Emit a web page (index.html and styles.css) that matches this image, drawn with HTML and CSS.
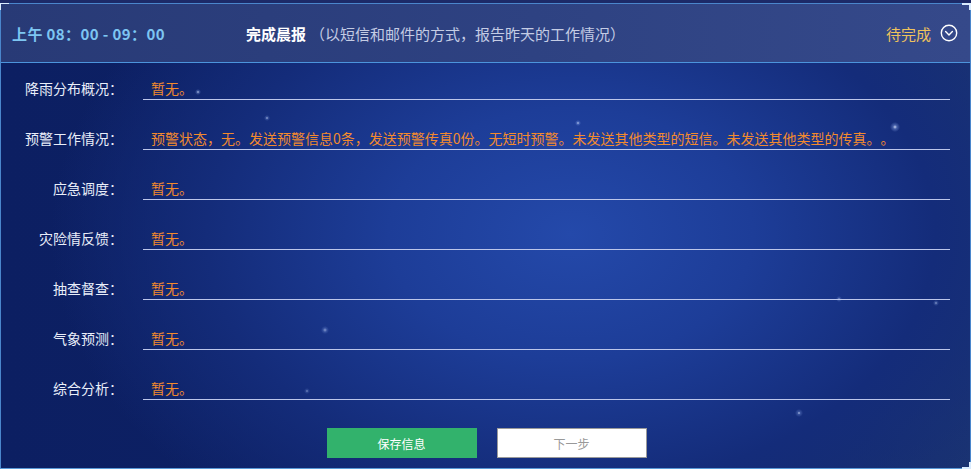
FILE: index.html
```html
<!DOCTYPE html>
<html lang="zh">
<head>
<meta charset="utf-8">
<title>完成晨报</title>
<link rel="stylesheet" href="styles.css">
</head>
<body>
<div class="panel">
  <div class="header">
    <div class="time">上午 08：00 - 09：00</div>
    <div class="title"><span class="title-main">完成晨报</span><span class="title-sub">（以短信和邮件的方式，报告昨天的工作情况）</span></div>
    <div class="status">
      <span class="status-text">待完成</span>
      <svg class="status-icon" width="18" height="18" viewBox="0 0 18 18"><circle cx="9" cy="9" r="7.7" fill="none" stroke="#ffffff" stroke-width="1.4"/><path d="M5.6 7.6 L9 11 L12.4 7.6" fill="none" stroke="#ffffff" stroke-width="1.4" stroke-linecap="round" stroke-linejoin="round"/></svg>
    </div>
  </div>
  <div class="form">
    <div class="row"><div class="label">降雨分布概况：</div><div class="value">暂无。</div></div>
    <div class="row"><div class="label">预警工作情况：</div><div class="value">预警状态，无。发送预警信息0条，发送预警传真0份。无短时预警。未发送其他类型的短信。未发送其他类型的传真。。</div></div>
    <div class="row"><div class="label">应急调度：</div><div class="value">暂无。</div></div>
    <div class="row"><div class="label">灾险情反馈：</div><div class="value">暂无。</div></div>
    <div class="row"><div class="label">抽查督查：</div><div class="value">暂无。</div></div>
    <div class="row"><div class="label">气象预测：</div><div class="value">暂无。</div></div>
    <div class="row"><div class="label">综合分析：</div><div class="value">暂无。</div></div>
    <div class="actions">
      <button class="btn btn-save">保存信息</button>
      <button class="btn btn-next">下一步</button>
    </div>
  </div>
</div>
</body>
</html>
```
FILE: styles.css
```css
html, body {
  margin: 0;
  padding: 0;
}
body {
  background: #1c2a68;
  font-family: "Noto Sans CJK SC", "Noto Sans", sans-serif;
  text-spacing-trim: space-all;
  width: 971px;
  height: 469px;
  overflow: hidden;
}
.panel {
  position: relative;
  margin-top: 3px;
  height: 466px;
  box-sizing: border-box;
  border: 1px solid #4a86cc;
  border-bottom-color: #5a9ad8;
  background:
    radial-gradient(circle at 197px 88px, rgba(210,225,255,0.8) 0, rgba(160,190,255,0.25) 1.5px, rgba(160,190,255,0) 3px),
    radial-gradient(circle at 266px 114px, rgba(210,225,255,0.7) 0, rgba(160,190,255,0.2) 1.5px, rgba(160,190,255,0) 3px),
    radial-gradient(circle at 577px 119px, rgba(210,225,255,0.8) 0, rgba(160,190,255,0.25) 1.5px, rgba(160,190,255,0) 3px),
    radial-gradient(circle at 894px 123px, rgba(220,230,255,0.9) 0, rgba(160,190,255,0.35) 2px, rgba(160,190,255,0) 5px),
    radial-gradient(circle at 324px 326px, rgba(210,225,255,0.6) 0, rgba(160,190,255,0.2) 2px, rgba(160,190,255,0) 4px),
    radial-gradient(circle at 306px 387px, rgba(210,225,255,0.5) 0, rgba(160,190,255,0.15) 1.5px, rgba(160,190,255,0) 3px),
    radial-gradient(circle at 838px 295px, rgba(210,225,255,0.6) 0, rgba(160,190,255,0.2) 1.5px, rgba(160,190,255,0) 3px),
    radial-gradient(circle at 935px 299px, rgba(210,225,255,0.6) 0, rgba(160,190,255,0.2) 1.5px, rgba(160,190,255,0) 3px),
    radial-gradient(circle at 798px 409px, rgba(210,225,255,0.8) 0, rgba(160,190,255,0.25) 1.5px, rgba(160,190,255,0) 4px),
    radial-gradient(ellipse 520px 360px at 570px 230px, #2449aa 0%, #1d3d98 35%, #142c7a 70%, rgba(14,34,100,0) 100%),
    linear-gradient(90deg, #0c1f62 0%, #0e2266 60%, #1a3372 100%);
}
.panel::before,
.panel::after {
  content: "";
  position: absolute;
  width: 7px;
  height: 5px;
  pointer-events: none;
}
.panel::before {
  top: -1px;
  left: -1px;
  border-top: 2px solid #d9ecff;
  border-left: 2px solid #d9ecff;
}
.panel::after {
  right: -1px;
  bottom: -1px;
  border-bottom: 2px solid #d9ecff;
  border-right: 2px solid #d9ecff;
}
.header {
  position: relative;
  height: 58px;
  border-bottom: 1px solid #4c94dc;
  background: linear-gradient(90deg, #283a76 0%, #2e4282 55%, #35498a 100%);
  display: flex;
  align-items: center;
  padding: 0 12px 0 11px;
}
.header::after {
  content: "";
  position: absolute;
  top: -1px;
  right: -1px;
  width: 7px;
  height: 5px;
  border-top: 2px solid #d9ecff;
  border-right: 2px solid #d9ecff;
}
.time {
  width: 234px;
  flex: none;
  color: #7dc6f2;
  font-size: 15px;
  font-weight: bold;
  letter-spacing: 0.4px;
  white-space: nowrap;
}
.title {
  flex: 1;
  white-space: nowrap;
  font-size: 15px;
}
.title-main {
  color: #ffffff;
  font-weight: bold;
  margin-right: 4px;
}
.title-sub {
  color: #c4cce4;
}
.status {
  display: flex;
  align-items: center;
  gap: 9px;
}
.status-text {
  color: #eec35c;
  font-size: 15px;
}
.status-icon {
  display: block;
}
.form {
  padding: 14px 20px 0 0;
  display: flex;
  flex-direction: column;
  gap: 27px;
}
.row {
  display: flex;
  align-items: flex-end;
}
.label {
  width: 122px;
  flex: none;
  text-align: right;
  color: #e9eef9;
  font-size: 14px;
  line-height: 22px;
  padding-bottom: 1px;
  white-space: nowrap;
}
.value {
  flex: 1;
  margin-left: 20px;
  padding-left: 8px;
  color: #f28a2e;
  font-size: 14px;
  line-height: 22px;
  border-bottom: 1px solid #bcc6ea;
  white-space: nowrap;
  overflow: hidden;
}
.actions {
  display: flex;
  justify-content: center;
  gap: 20px;
  margin-top: 1px;
  padding-left: 22px;
}
.btn {
  width: 150px;
  height: 30px;
  font-family: "Noto Sans CJK SC", "Noto Sans", sans-serif;
  font-size: 12px;
  border-radius: 0;
  cursor: pointer;
}
.btn-save {
  background: #32b26c;
  color: #ffffff;
  border: none;
}
.btn-next {
  background: #ffffff;
  color: #999999;
  border: 1px solid #9a9a9a;
}
```
